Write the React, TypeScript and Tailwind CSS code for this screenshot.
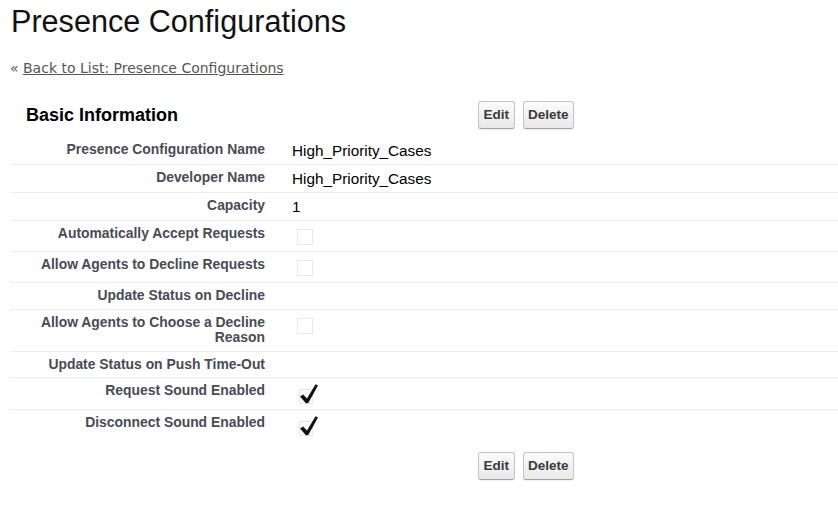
import React from 'react';

type Field = {
  label: string;
  value?: string;
  check?: 'on' | 'off';
};

const fields: Field[] = [
  { label: 'Presence Configuration Name', value: 'High_Priority_Cases' },
  { label: 'Developer Name', value: 'High_Priority_Cases' },
  { label: 'Capacity', value: '1' },
  { label: 'Automatically Accept Requests', check: 'off' },
  { label: 'Allow Agents to Decline Requests', check: 'off' },
  { label: 'Update Status on Decline' },
  { label: 'Allow Agents to Choose a Decline Reason', check: 'off' },
  { label: 'Update Status on Push Time-Out' },
  { label: 'Request Sound Enabled', check: 'on' },
  { label: 'Disconnect Sound Enabled', check: 'on' },
];

const Unchecked = () => (
  <svg width="22" height="20" viewBox="0 0 22 20" className="block">
    <rect x="5.5" y="3.5" width="15" height="15" fill="#fff" stroke="#d2d2d2" strokeDasharray="1 1" />
  </svg>
);

const Checked = () => (
  <svg width="27" height="21" viewBox="0 0 27 21" className="block">
    <rect x="7.5" y="6.5" width="13" height="14" fill="#fff" stroke="#d2d2d2" strokeDasharray="1 1" />
    <path d="M8 13.4 L11.2 11.4 L14.9 15.4 L23.6 1.3 L26 2.6 L16.3 20 L13.9 20.2 Z" fill="#111" />
  </svg>
);

const Buttons = () => (
  <div className="flex gap-[8px]">
    {['Edit', 'Delete'].map(b => (
      <button
        key={b}
        className="h-[28px] px-[4.5px] rounded-[3px] border border-[#c4c4c4] border-b-[#a3a3a3] bg-linear-to-b from-[#fbfbfb] to-[#e9e9e9] text-[13.5px] font-bold text-[#3a3a3a] leading-none shadow-[0_1px_1px_rgba(0,0,0,0.06)]"
      >
        {b}
      </button>
    ))}
  </div>
);

export default function App() {
  return (
    <div className="w-[838px] h-[506px] bg-white pl-[10px] overflow-hidden font-['Liberation_Sans',Arial,sans-serif]">
      <h1 className="pt-[4px] pl-[1px] text-[30.6px] leading-[34px] font-normal text-[#111]">
        Presence Configurations
      </h1>

      <div className="mt-[22px] text-[14px] leading-[16px] text-[#555] font-['DejaVu_Sans',Verdana,sans-serif]">
        « <a href="#" className="underline text-[#555]">Back to List: Presence Configurations</a>
      </div>

      <div className="mt-[21px]">
        <div className="flex items-center pt-[4px] pb-[8px]">
          <h2 className="w-[468px] pl-[16px] text-[18px] font-bold text-[#000]">Basic Information</h2>
          <Buttons />
        </div>

        <div>
          {fields.map((f, i) => (
            <div
              key={f.label}
              className={`flex ${i < fields.length - 1 ? 'border-b border-[#ececec]' : ''}`}
            >
              <div className="w-[265px] shrink-0 pr-[10px] py-[5px] text-right text-[13.9px] leading-[15.5px] font-bold text-[#4a4a56]">
                {f.label}
              </div>
              <div className="pl-[17px] py-[5px] text-[15.3px] leading-[17px] text-[#000]">
                {f.value}
                {f.check === 'off' && <Unchecked />}
                {f.check === 'on' && <Checked />}
              </div>
            </div>
          ))}
        </div>

        <div className="flex pt-[11px]">
          <div className="w-[468px]" />
          <Buttons />
        </div>
      </div>
    </div>
  );
}
